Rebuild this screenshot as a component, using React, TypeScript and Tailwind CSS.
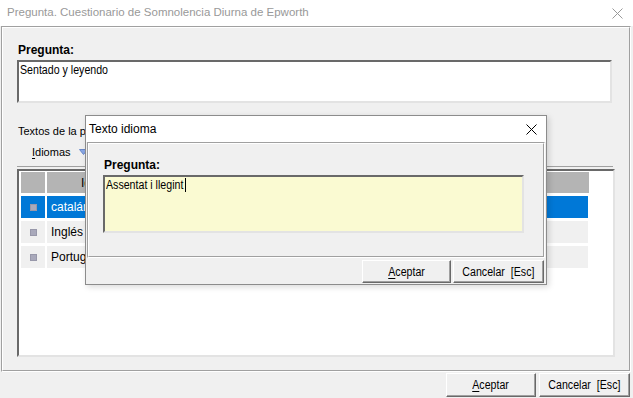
import React from 'react'

const ui = "font-['Liberation_Sans',Arial,sans-serif]"

// Arial Narrow look-alike: Liberation Sans squeezed horizontally
function Narrow({ children, center }: { children: React.ReactNode; center?: boolean }) {
  return (
    <span
      className={`block whitespace-pre ${ui} text-[12.5px] leading-[14px] text-black scale-x-[0.85] ${
        center ? 'origin-center' : 'origin-left'
      }`}
    >
      {children}
    </span>
  )
}

function CloseIcon({ color }: { color: string }) {
  return (
    <svg width="11" height="11" viewBox="0 0 11 11">
      <path d="M0.5 0.5 L10.5 10.5 M10.5 0.5 L0.5 10.5" stroke={color} strokeWidth="1" />
    </svg>
  )
}

// Classic 3D push button
function Btn({ label, underline, w, h }: { label: string; underline?: boolean; w: string; h: string }) {
  return (
    <div
      className={`${w} ${h} bg-[#f0f0f0] border border-t-white border-l-white border-r-[#696969] border-b-[#696969] shadow-[inset_-1px_-1px_0_#a0a0a0] flex items-center justify-center`}
    >
      <Narrow center>
        {underline ? (
          <>
            <span className="underline underline-offset-2">{label[0]}</span>
            {label.slice(1)}
          </>
        ) : (
          label
        )}
      </Narrow>
    </div>
  )
}

// etched group frame
function Etched({ className, children }: { className: string; children: React.ReactNode }) {
  return (
    <div className={`border border-t-[#a0a0a0] border-l-[#a0a0a0] border-r-white border-b-white ${className}`}>
      <div className="w-full h-full border border-t-white border-l-white border-r-[#a0a0a0] border-b-[#a0a0a0]">
        {children}
      </div>
    </div>
  )
}

function Marker() {
  return <div className="w-[7px] h-[7px] bg-[#a9a9bb] border border-[#9898aa]" />
}

const rows = [
  { name: 'catalán', selected: true },
  { name: 'Inglés', selected: false },
  { name: 'Portugués', selected: false },
]

export default function App() {
  return (
    <div className="relative w-[633px] h-[398px] bg-[#f0f0f0] overflow-hidden">
      {/* Title bar */}
      <div className="h-[26px] bg-white flex items-center justify-between pl-[7px] pr-[10px]">
        <span className={`${ui} text-[11.5px] text-[#999999]`}>Pregunta. Cuestionario de Somnolencia Diurna de Epworth</span>
        <CloseIcon color="#999999" />
      </div>

      {/* Main panel */}
      <Etched className="ml-[1px] w-[630px] h-[346px]">
        <div className="pl-[14px] pt-[15px]">
          <div className={`${ui} font-bold text-[12px] leading-[14px] pl-[1px] text-black`}>Pregunta:</div>
          <div className="mt-[3px] w-[595px] h-[43px] bg-white border-2 border-t-[#696969] border-l-[#696969] border-r-[#e3e3e3] border-b-[#e3e3e3] pl-[1px] pt-[1px] flex items-start">
            <Narrow>Sentado y leyendo</Narrow>
          </div>

          <div className={`${ui} text-[11px] leading-[14px] mt-[21px] pl-[1px] text-black`}>Textos de la pregunta</div>
          <div className="flex items-center gap-[8px] mt-[7px] pl-[15px] h-[14px]">
            <span className={`${ui} text-[11px] leading-[14px] text-black`}>
              <span className="underline underline-offset-2">I</span>diomas
            </span>
            <svg width="9" height="6" viewBox="0 0 9 6">
              <path d="M0.5 0.5 L8.5 0.5 L4.5 5.5 Z" fill="#8aa8e6" stroke="#6a88c8" strokeWidth="1" />
            </svg>
          </div>
          <div className="mt-[7px] w-[596px] h-[1px] bg-[#a0a0a0]" />

          {/* Grid */}
          <div className="mt-[2px] w-[598px] h-[188px] bg-white border-2 border-t-[#696969] border-l-[#696969] border-r-[#e3e3e3] border-b-[#e3e3e3] pl-[2px] pt-[1px]">
            <div className="flex gap-[2px] h-[21px]">
              <div className="w-[24px] bg-[#b4b4b4]" />
              <div className={`w-[542px] bg-[#b4b4b4] pl-[34px] flex items-center ${ui} text-[12px] text-black`}>Idioma</div>
            </div>
            {rows.map((r) => (
              <div key={r.name} className="flex gap-[2px] h-[22px] mt-[3px]">
                <div className={`w-[24px] flex items-center justify-center ${r.selected ? 'bg-[#0078d7]' : 'bg-[#f0f0f0]'}`}>
                  <Marker />
                </div>
                <div
                  className={`w-[541px] pl-[4px] flex items-center ${ui} text-[12px] ${
                    r.selected ? 'bg-[#0078d7] text-white' : 'bg-[#f0f0f0] text-black'
                  }`}
                >
                  {r.name}
                </div>
              </div>
            ))}
          </div>
        </div>
      </Etched>

      {/* Bottom buttons */}
      <div className="flex justify-end gap-[3px] pr-[3px] pt-[1px]">
        <Btn label="Aceptar" underline w="w-[90px]" h="h-[24px]" />
        <Btn label="Cancelar  [Esc]" w="w-[91px]" h="h-[24px]" />
      </div>

      {/* Dialog: Texto idioma */}
      <div className="absolute left-[85px] top-[115px] w-[462px] h-[170px] bg-[#f0f0f0] border border-[#8c8c8c] shadow-[2px_2px_6px_rgba(0,0,0,0.15)]">
        <div className="h-[26px] bg-white flex items-center justify-between pl-[3px] pr-[9px]">
          <span className={`${ui} text-[12px] text-black`}>Texto idioma</span>
          <CloseIcon color="#000000" />
        </div>
        <Etched className="ml-[1px] w-[458px] h-[116px]">
          <div className="pl-[14px] pt-[14px]">
            <div className={`${ui} font-bold text-[12px] leading-[14px] pl-[1px] text-black`}>Pregunta:</div>
            <div className="mt-[3px] w-[421px] h-[58px] bg-[#fafad2] border-2 border-t-[#696969] border-l-[#696969] border-r-[#e3e3e3] border-b-[#e3e3e3] pl-[1px] pt-[1px] flex items-start">
              <div className="w-[79px]">
                <Narrow>Assentat i llegint</Narrow>
              </div>
              <span className="w-[1px] h-[14px] bg-black" />
            </div>
          </div>
        </Etched>
        <div className="flex justify-end gap-[2px] pr-[2px] pt-[2px]">
          <Btn label="Aceptar" underline w="w-[89px]" h="h-[23px]" />
          <Btn label="Cancelar  [Esc]" w="w-[91px]" h="h-[23px]" />
        </div>
      </div>
    </div>
  )
}
